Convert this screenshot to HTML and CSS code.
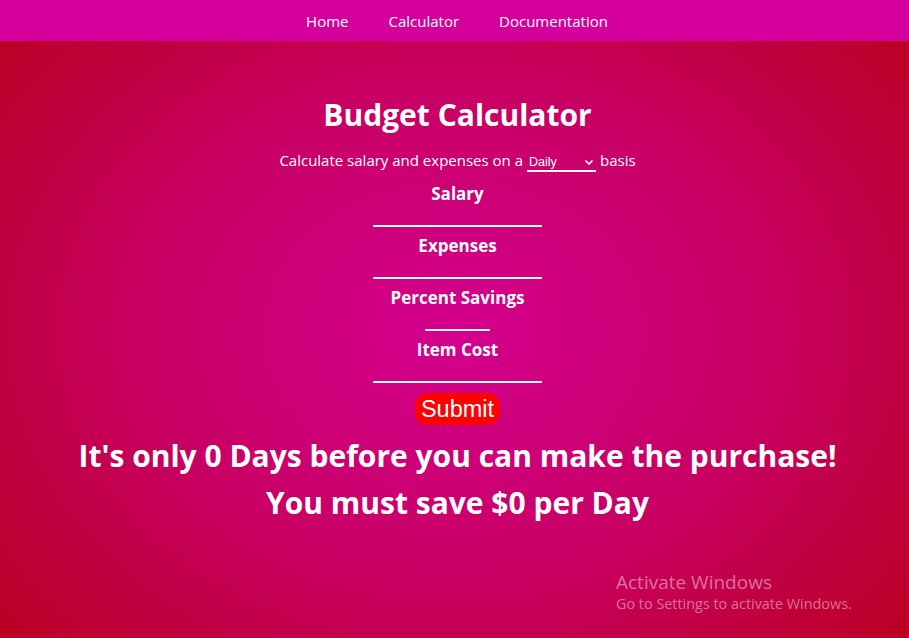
FILE: index.html
```html
<!DOCTYPE html>
<html>
<head>
<meta charset="utf-8">
<link rel="stylesheet" href="styles.css">
</head>
<body>
<nav class="nav">
  <a class="nav-link" href="#">Home</a>
  <a class="nav-link" href="#">Calculator</a>
  <a class="nav-link" href="#">Documentation</a>
</nav>
<main class="main">
  <h1 class="title">Budget Calculator</h1>
  <p class="subtitle">Calculate salary and expenses on a
    <span class="select"><span>Daily</span><svg width="10" height="7" viewBox="0 0 10 7"><path d="M1.5 1.5 L5 5 L8.5 1.5" fill="none" stroke="#fff" stroke-width="1.6"/></svg></span>
    basis</p>
  <form class="form">
    <label class="label">Salary</label>
    <div class="field wide"></div>
    <label class="label">Expenses</label>
    <div class="field wide"></div>
    <label class="label">Percent Savings</label>
    <div class="field narrow"></div>
    <label class="label">Item Cost</label>
    <div class="field wide"></div>
    <button class="submit" type="button">Submit</button>
  </form>
  <p class="result">It's only 0 Days before you can make the purchase!</p>
  <p class="result second">You must save $0 per Day</p>
</main>
<div class="watermark">
  <div class="wm-title">Activate Windows</div>
  <div class="wm-sub">Go to Settings to activate Windows.</div>
</div>
</body>
</html>
```
FILE: styles.css
```css
html, body {
  margin: 0;
  padding: 0;
  height: 100%;
}
body {
  font-family: "Open Sans", "Noto Sans", sans-serif;
  color: #fff;
  background: radial-gradient(ellipse 75% 85% at 50% 52%, #d4008f 0%, #c80063 45%, #b6000e 100%);
  overflow: hidden;
  position: relative;
}
.nav {
  height: 41px;
  background: #d5009b;
  display: flex;
  justify-content: center;
  align-items: center;
  gap: 40px;
  padding-left: 5px;
}
.nav-link {
  color: #fff;
  text-decoration: none;
  font-size: 15px;
}
.main {
  display: flex;
  flex-direction: column;
  align-items: center;
  padding-left: 6px;
}
.title {
  margin: 52px 0 0;
  font-size: 30px;
  font-weight: 700;
  line-height: 44px;
}
.subtitle {
  margin: 11px 0 0;
  font-size: 15px;
  line-height: 20px;
  display: flex;
  align-items: center;
  gap: 4px;
}
.select {
  display: inline-flex;
  align-items: center;
  justify-content: space-between;
  width: 65px;
  padding: 2px 2px 0;
  border-bottom: 2px solid #fff;
  font-family: "Liberation Sans", Arial, sans-serif;
  font-size: 12.5px;
  line-height: 16px;
  margin-top: 4px;
}
.form {
  display: flex;
  flex-direction: column;
  align-items: center;
  margin-top: 10px;
}
.label {
  font-size: 17px;
  font-weight: 700;
  line-height: 24px;
}
.field {
  height: 2px;
  background: #fff;
  margin: 19px 0 7px;
}
.field.wide { width: 169px; }
.field.narrow { width: 65px; }
.submit {
  margin-top: 3px;
  background: #ff0000;
  color: #fff;
  border: none;
  border-radius: 13px;
  font-family: "Liberation Sans", Arial, sans-serif;
  font-size: 23.5px;
  line-height: 30px;
  padding: 1px 6px 1px;
}
.result {
  margin: 11px 0 0;
  font-size: 30px;
  font-weight: 700;
  line-height: 40px;
}
.result.second {
  margin-top: 7px;
}
.watermark {
  position: absolute;
  left: 616px;
  top: 570px;
  color: rgba(255,255,255,0.45);
}
.wm-title {
  font-size: 19px;
  line-height: 24px;
}
.wm-sub {
  font-size: 14.4px;
  line-height: 20px;
}
```
